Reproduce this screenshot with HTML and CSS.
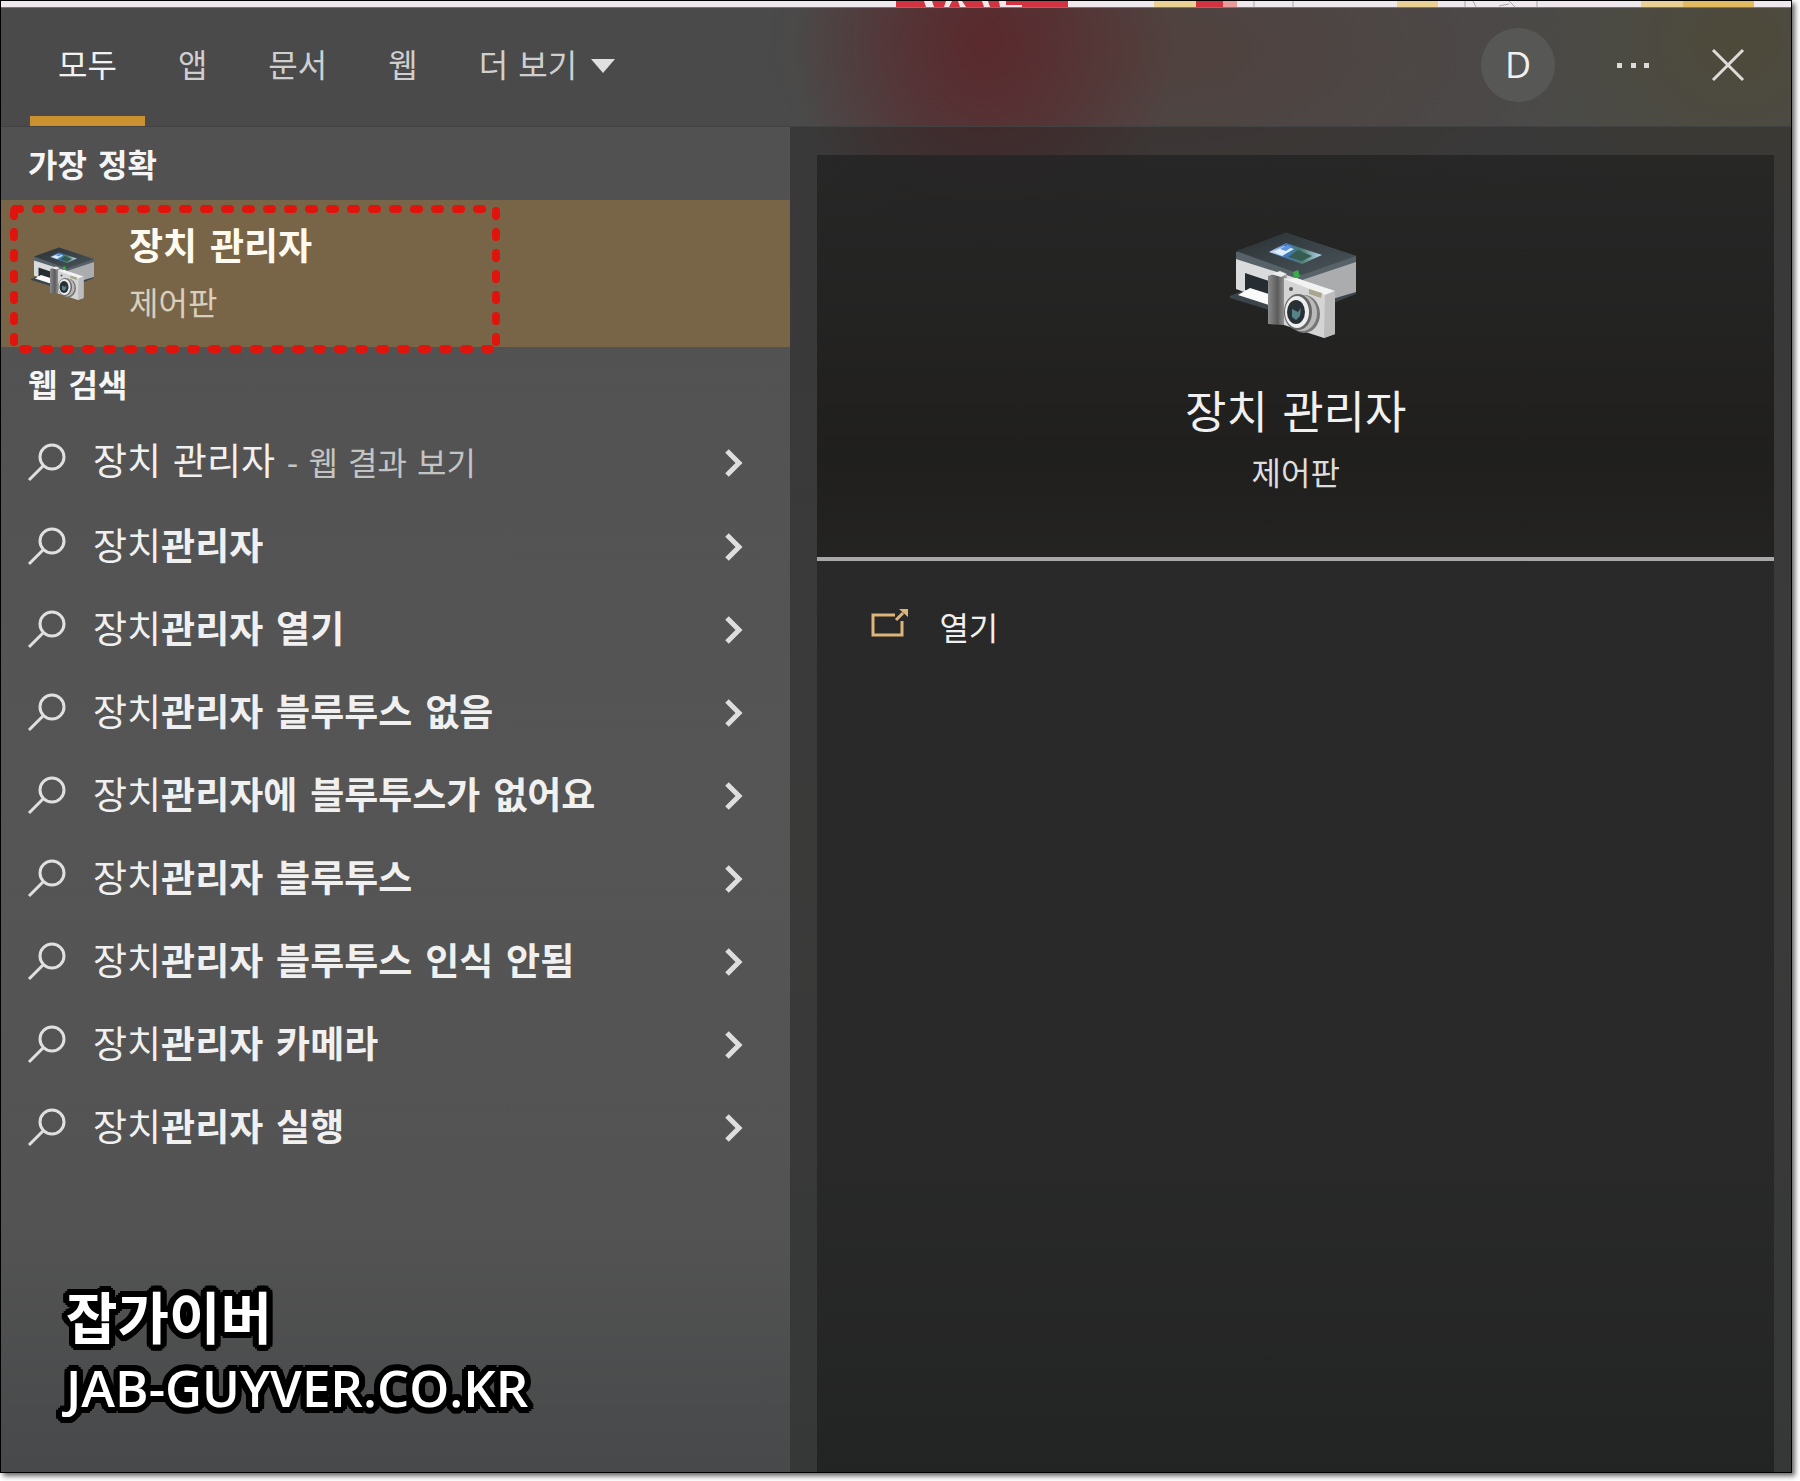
FILE: index.html
```html
<!DOCTYPE html>
<html lang="ko">
<head>
    <meta charset="UTF-8">
    <title>장치 관리자</title>
    <link rel="stylesheet" href="styles.css">
</head>
<body>
    <svg class="symbols" width="0" height="0" aria-hidden="true">
        <defs>
            <linearGradient id="lid" x1="0" y1="0" x2="1" y2="1">
                <stop offset="0" stop-color="#2a3135"/>
                <stop offset="1" stop-color="#4b555a"/>
            </linearGradient>
            <linearGradient id="grip" x1="0" y1="0" x2="1" y2="0">
                <stop offset="0" stop-color="#8c8c8c"/>
                <stop offset="0.5" stop-color="#5c5c5c"/>
                <stop offset="1" stop-color="#a8a8a8"/>
            </linearGradient>
            <linearGradient id="photo" x1="0" y1="0" x2="1" y2="0">
                <stop offset="0" stop-color="#d8ecff"/>
                <stop offset="0.3" stop-color="#3f78c8"/>
                <stop offset="0.6" stop-color="#4a7a6c"/>
                <stop offset="1" stop-color="#b9d8f5"/>
            </linearGradient>
        </defs>
        <symbol id="search" viewBox="0 0 40 40">
            <circle cx="25" cy="14" r="12"/>
            <path d="M16 23L2 37"/>
        </symbol>
        <symbol id="chevron" viewBox="0 0 20 30">
            <path d="M3 3L15 15L3 27"/>
        </symbol>
        <symbol id="device" viewBox="4 0 132 108">
            <path d="M4 64L16 59L50 70V80L40 77L4 66Z" fill="#3b454b"/>
            <path d="M90 70L130 58V62L100 74Z" fill="#3b454b"/>
            <path d="M10 25L76 45V76L46 70L10 57Z" fill="#d9dbdd"/>
            <path d="M76 45L130 26V60L76 76Z" fill="#aaacae"/>
            <path d="M19 41L46 50V68L19 58Z" fill="#252d32"/>
            <path d="M12 63L24 56L46 63V74Z" fill="#fafafa"/>
            <path d="M10 20L60 1L130 24V30L76 48L10 27Z" fill="#566168"/>
            <path d="M10 19L60 1L130 24L76 43Z" fill="url(#lid)"/>
            <path d="M43 20L60 11L96 23L76 32Z" fill="url(#photo)"/>
            <path d="M62 25L72 18L86 24L76 29Z" fill="#365b53"/>
            <path d="M47 20L58 14L68 17L56 24Z" fill="#dceeff"/>
            <path d="M54 17L61 13L66 15L60 19Z" fill="#5b93dd"/>
            <path d="M67 40L72 38L74 45L68 47Z" fill="#38ad49"/>
            <path d="M42 44L54 40L61 44L58 93L42 92Z" fill="url(#grip)"/>
            <path d="M45 42L54 39L61 42L55 45Z" fill="#ececec"/>
            <path d="M58 46L70 46L109 59V102L98 106L58 93Z" fill="#d4d4d4"/>
            <path d="M58 47L70 46L109 59L99 63Z" fill="#f2f2f2"/>
            <path d="M99 63L109 59V102L98 106Z" fill="#bcbcbc"/>
            <path d="M83 57L96 61L95 66L83 62Z" fill="#aaa58e"/>
            <circle cx="65" cy="57" r="2" fill="#555"/>
            <ellipse cx="78" cy="82" rx="16" ry="19" fill="#777"/>
            <ellipse cx="76" cy="81" rx="15" ry="18" fill="#b9b9b9"/>
            <ellipse cx="72" cy="80" rx="14" ry="18" fill="#666"/>
            <ellipse cx="71" cy="80" rx="12" ry="16" fill="#eee"/>
            <ellipse cx="70" cy="80" rx="9" ry="12" fill="#283035"/>
            <path d="M66 77L72 80L75 76L74 84L70 88L66 85Z" fill="#558387"/>
        </symbol>
    </svg>

    <div class="window">
        <svg class="backdrop-strip" viewBox="0 0 1790 6" preserveAspectRatio="none" aria-hidden="true">
            <path fill="#d13440" d="M895 0h172v6H895zM1195 0h27v6h-27z"/>
            <path fill="#efe9ee" d="M923 0h8l2 6h-8zM945 0h6l-3 6h-5zM957 0h4l4 6h-6zM981 0h6l2 6h-6zM998 0h7v4h16v2h-22z"/>
            <path fill="#ebd193" d="M1153 0h42v6h-42zM1396 0h41v6h-41zM1640 0h42v6h-42z"/>
            <path fill="#ea9b9c" d="M1222 0h14v6h-14z"/>
            <path fill="#e2bb60" d="M1682 0h71v6h-71z"/>
            <path fill="none" stroke="#a9a5a8" d="M1253 0v6M1292 0v6M1464 0v6M1472 0l3 6M1498 5l10-2M1508 0l6 6M1536 0v6"/>
        </svg>

        <header class="topbar">
            <nav class="tabs">
                <button class="tab active">모두</button>
                <button class="tab">앱</button>
                <button class="tab">문서</button>
                <button class="tab">웹</button>
                <button class="tab">더 보기
                    <svg class="caret" viewBox="0 0 24 14" aria-hidden="true"><path d="M0 0h24L12 14z"/></svg>
                </button>
            </nav>
            <div class="tools">
                <button class="avatar">D</button>
                <button class="tool" aria-label="옵션">
                    <svg width="34" height="34" viewBox="0 0 34 34"><path fill="#dddcd8" d="M1 15h5v5H1zM15 15h5v5h-5zM28 15h5v5h-5z"/></svg>
                </button>
                <button class="tool" aria-label="닫기">
                    <svg width="34" height="34" viewBox="0 0 34 34"><path fill="none" stroke="#dddcd8" stroke-width="3" d="M2 2L32 32M32 2L2 32"/></svg>
                </button>
            </div>
        </header>

        <main class="content">
            <section class="results">
                <h2 class="group-title">가장 정확</h2>
                <a class="best-match" href="#">
                    <svg class="best-icon" aria-hidden="true"><use href="#device"/></svg>
                    <span class="best-text">
                        <strong class="best-name">장치 관리자</strong>
                        <span class="best-type">제어판</span>
                    </span>
                    <svg class="highlight" viewBox="0 0 490 148" aria-hidden="true">
                        <path d="M5 4H486V144"/>
                        <path d="M4 6V144H486"/>
                    </svg>
                </a>

                <h2 class="group-title">웹 검색</h2>
                <ul class="suggestions">
                    <li><a class="suggestion first" href="#"><svg class="search-icon"><use href="#search"/></svg><span class="label">장치 관리자 <small>- 웹 결과 보기</small></span><svg class="chevron"><use href="#chevron"/></svg></a></li>
                    <li><a class="suggestion" href="#"><svg class="search-icon"><use href="#search"/></svg><span class="label">장치<b>관리자</b></span><svg class="chevron"><use href="#chevron"/></svg></a></li>
                    <li><a class="suggestion" href="#"><svg class="search-icon"><use href="#search"/></svg><span class="label">장치<b>관리자 열기</b></span><svg class="chevron"><use href="#chevron"/></svg></a></li>
                    <li><a class="suggestion" href="#"><svg class="search-icon"><use href="#search"/></svg><span class="label">장치<b>관리자 블루투스 없음</b></span><svg class="chevron"><use href="#chevron"/></svg></a></li>
                    <li><a class="suggestion" href="#"><svg class="search-icon"><use href="#search"/></svg><span class="label">장치<b>관리자에 블루투스가 없어요</b></span><svg class="chevron"><use href="#chevron"/></svg></a></li>
                    <li><a class="suggestion" href="#"><svg class="search-icon"><use href="#search"/></svg><span class="label">장치<b>관리자 블루투스</b></span><svg class="chevron"><use href="#chevron"/></svg></a></li>
                    <li><a class="suggestion" href="#"><svg class="search-icon"><use href="#search"/></svg><span class="label">장치<b>관리자 블루투스 인식 안됨</b></span><svg class="chevron"><use href="#chevron"/></svg></a></li>
                    <li><a class="suggestion" href="#"><svg class="search-icon"><use href="#search"/></svg><span class="label">장치<b>관리자 카메라</b></span><svg class="chevron"><use href="#chevron"/></svg></a></li>
                    <li><a class="suggestion" href="#"><svg class="search-icon"><use href="#search"/></svg><span class="label">장치<b>관리자 실행</b></span><svg class="chevron"><use href="#chevron"/></svg></a></li>
                </ul>

                <div class="watermark">
                    <p class="watermark-name">잡가이버</p>
                    <p class="watermark-url">JAB-GUYVER.CO.KR</p>
                </div>
            </section>

            <section class="preview">
                <div class="card">
                    <div class="card-head">
                        <svg class="card-icon" aria-hidden="true"><use href="#device"/></svg>
                        <h1 class="card-title">장치 관리자</h1>
                        <p class="card-type">제어판</p>
                    </div>
                    <a class="action" href="#">
                        <svg class="open-icon" viewBox="0 0 38 30" aria-hidden="true">
                            <path class="open-frame" d="M24 7H2V27H31V13"/>
                            <path class="open-frame" d="M25 12L32 5"/>
                            <path class="open-head" d="M28 1H37V9Z"/>
                        </svg>
                        <span>열기</span>
                    </a>
                </div>
            </section>
        </main>
    </div>
</body>
</html>
```
FILE: styles.css
```css
* {
    box-sizing: border-box;
}

body {
    margin: 0;
    min-height: 100vh;
    padding: 0 8px 8px 0;
    display: flex;
    background: #ffffff;
    font-family: "DejaVu Sans", "Noto Sans CJK KR", sans-serif;
    font-size: 32px;
    line-height: 48px;
    color: #f0f0f0;
}

h1, h2, p, ul {
    margin: 0;
    padding: 0;
    font-weight: 400;
}

ul {
    list-style: none;
}

a {
    color: inherit;
    text-decoration: none;
}

button {
    border: none;
    padding: 0;
    background: none;
    font: inherit;
    color: inherit;
    cursor: pointer;
}

.symbols {
    position: absolute;
}

.window {
    flex: 1;
    display: flex;
    flex-direction: column;
    border: 1px solid #000000;
    box-shadow: 3px 3px 5px rgba(0, 0, 0, 0.6);
    background:
        radial-gradient(ellipse 190px 230px at 55% 40px, rgba(94, 32, 38, 0.75), rgba(94, 32, 38, 0.5) 40%, transparent),
        radial-gradient(ellipse 420px 200px at 65% 50px, rgba(84, 60, 54, 0.6), transparent),
        radial-gradient(ellipse 230px 200px at 97% 40px, rgba(80, 74, 48, 0.6), transparent),
        linear-gradient(#4a4a4a, #4b4b4a 60%, #454849);
}

.backdrop-strip {
    display: block;
    width: 100%;
    height: 6px;
    background: #efe9ee;
}

.topbar {
    display: flex;
    justify-content: space-between;
    height: 120px;
    padding: 0 46px 0 29px;
    border-top: 1px solid #777777;
    border-bottom: 1px solid #424242;
}

.tabs {
    display: flex;
    gap: 5px;
}

.tab {
    display: flex;
    align-items: center;
    gap: 14px;
    padding: 8px 28px 0;
    border-bottom: 10px solid transparent;
    color: #cfcfcf;
}

.tab.active {
    border-bottom-color: #cb902f;
    color: #f2f2f2;
}

.caret {
    width: 24px;
    height: 14px;
    fill: #e0e0e0;
}

.tools {
    display: flex;
    align-items: center;
    gap: 61px;
    padding-bottom: 4px;
}

.avatar {
    width: 74px;
    height: 74px;
    border-radius: 50%;
    background: #575855;
    font-family: "Open Sans", sans-serif;
    font-size: 36px;
}

.tool {
    display: flex;
}

.content {
    flex: 1;
    display: flex;
}

.results {
    flex: 0 0 44.1%;
    display: flex;
    flex-direction: column;
    background: linear-gradient(#515151, #555555 50%, #535353 82%, #47494a);
}

.group-title {
    padding: 16px 27px 10px;
    font-size: 32px;
    font-weight: 700;
    line-height: 47px;
    color: #f5f5f5;
}

.best-match {
    position: relative;
    display: flex;
    align-items: center;
    gap: 32px;
    height: 147px;
    padding: 0 30px;
    background: #786547;
}

.best-icon {
    width: 66px;
    height: 58px;
}

.best-text {
    display: flex;
    flex-direction: column;
    gap: 8px;
    padding-top: 4px;
}

.best-name {
    font-size: 37px;
    font-weight: 700;
    color: #fffaf0;
}

.best-type {
    color: #d9cfbf;
}

.highlight {
    position: absolute;
    left: 9px;
    top: 5px;
    width: 490px;
    height: 148px;
    fill: none;
    stroke: #e1130d;
    stroke-width: 8;
    stroke-linecap: round;
    stroke-dasharray: 5 16;
}

.suggestion {
    display: flex;
    align-items: center;
    height: 83px;
    padding: 0 46px 0 26px;
    font-size: 37px;
}

.suggestion.first {
    height: 85px;
}

.suggestion b {
    font-weight: 700;
}

.suggestion small {
    font-size: 32px;
    color: #c4c4c4;
}

.search-icon {
    width: 40px;
    height: 40px;
    fill: none;
    stroke: #e0e0e0;
    stroke-width: 3;
}

.label {
    flex: 1;
    padding: 2px 0 0 26px;
}

.chevron {
    width: 20px;
    height: 30px;
    fill: none;
    stroke: #dedede;
    stroke-width: 5;
}

.watermark {
    margin-top: auto;
    padding: 0 65px 51px;
    font-family: "Open Sans", "Noto Sans CJK KR", sans-serif;
    color: #ffffff;
    text-shadow:
        6px 0 #000000, -6px 0 #000000, 0 6px #000000, 0 -6px #000000,
        6px 2px #000000, 6px -2px #000000, -6px 2px #000000, -6px -2px #000000,
        2px 6px #000000, 2px -6px #000000, -2px 6px #000000, -2px -6px #000000,
        4px 4px #000000, 4px -4px #000000, -4px 4px #000000, -4px -4px #000000,
        3px 0 #000000, -3px 0 #000000, 0 3px #000000, 0 -3px #000000;
}

.watermark-name {
    font-size: 56px;
    font-weight: 700;
    line-height: 72px;
}

.watermark-url {
    font-size: 51px;
    font-weight: 600;
    line-height: 68px;
}

.preview {
    flex: 1;
    display: flex;
    padding: 28px 17px 0 27px;
    background: rgba(32, 32, 32, 0.4);
}

.card {
    flex: 1;
    background: linear-gradient(rgba(36, 36, 36, 0.86), rgba(40, 40, 40, 0.94) 40%, rgba(40, 40, 40, 0.94) 75%, rgba(33, 35, 34, 0.94));
}

.card-head {
    display: flex;
    flex-direction: column;
    align-items: center;
    padding: 77px 20px 55px;
    border-bottom: 4px solid #a8a8a8;
    background: linear-gradient(rgba(28, 27, 25, 0), rgba(28, 27, 25, 0.7) 75%, rgba(28, 27, 25, 0.4));
}

.card-icon {
    width: 132px;
    height: 108px;
    margin-bottom: 42px;
}

.card-title {
    font-size: 45px;
    line-height: 64px;
}

.card-type {
    line-height: 56px;
    color: #dddddd;
}

.action {
    display: flex;
    align-items: flex-start;
    gap: 30px;
    padding: 44px 54px;
}

.open-icon {
    width: 38px;
    height: 30px;
    margin-top: 3px;
}

.open-frame {
    fill: none;
    stroke: #ddb479;
    stroke-width: 3;
}

.open-head {
    fill: #ddb479;
}
```
